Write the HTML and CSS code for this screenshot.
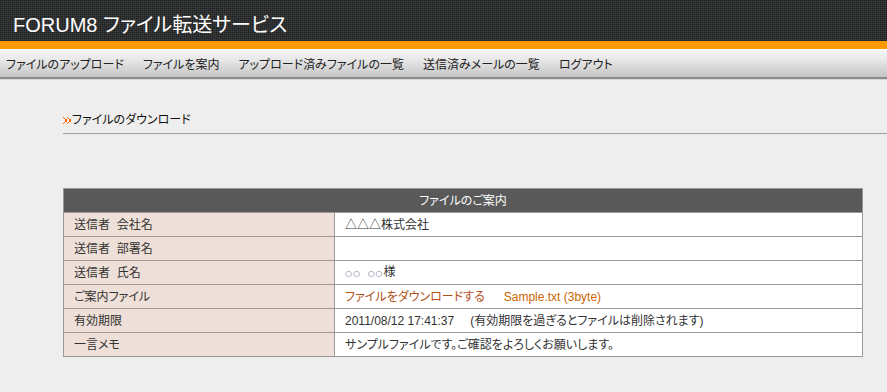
FILE: index.html
```html
<!DOCTYPE html>
<html lang="ja">
  <head>
    <meta charset="UTF-8" />
    <title>FORUM8 ファイル転送サービス</title>
    <link rel="stylesheet" href="styles.css">
  </head>
  <body>
    <div class="header">
      <h1 class="site-title">FORUM8 ファイル転送サービス</h1>
    </div>
    <div class="nav">
      <a href="#">ファイルのアップロード</a>
      <a href="#">ファイルを案内</a>
      <a href="#">アップロード済みファイルの一覧</a>
      <a href="#">送信済みメールの一覧</a>
      <a href="#">ログアウト</a>
    </div>
    <div class="content">
      <h2 class="page-title">
        <svg class="arrows" width="8" height="7" viewBox="0 0 8 7">
          <rect x="0" y="0" width="1" height="1" />
          <rect x="1" y="1" width="1" height="1" />
          <rect x="2" y="2" width="2" height="3" />
          <rect x="1" y="5" width="1" height="1" />
          <rect x="0" y="6" width="1" height="1" />
          <rect x="4" y="0" width="1" height="1" />
          <rect x="5" y="1" width="1" height="1" />
          <rect x="6" y="2" width="2" height="3" />
          <rect x="5" y="5" width="1" height="1" />
          <rect x="4" y="6" width="1" height="1" />
        </svg>ファイルのダウンロード
      </h2>
      <table class="info-table">
        <tr>
          <th colspan="2">ファイルのご案内</th>
        </tr>
        <tr>
          <td class="label">送信者&nbsp;&nbsp;会社名</td>
          <td>△△△株式会社</td>
        </tr>
        <tr>
          <td class="label">送信者&nbsp;&nbsp;部署名</td>
          <td></td>
        </tr>
        <tr>
          <td class="label">送信者&nbsp;&nbsp;氏名</td>
          <td><span class="circles">○○</span>&nbsp;&nbsp;<span class="circles">○○</span>様</td>
        </tr>
        <tr>
          <td class="label">ご案内ファイル</td>
          <td><a href="#" class="dl-link">ファイルをダウンロードする</a><span class="file-name">Sample.txt (3byte)</span></td>
        </tr>
        <tr>
          <td class="label">有効期限</td>
          <td>2011/08/12 17:41:37<span class="note">(有効期限を過ぎるとファイルは削除されます)</span></td>
        </tr>
        <tr>
          <td class="label">一言メモ</td>
          <td>サンプルファイルです。ご確認をよろしくお願いします。</td>
        </tr>
      </table>
    </div>
  </body>
</html>
```

FILE: styles.css
```css
body {
  margin: 0;
  padding: 0;
  background-color: #eeeeee;
  color: #333333;
  font-family: "Liberation Sans", "Noto Sans CJK JP", sans-serif;
  font-size: 12px;
  font-feature-settings: "palt";
}

.header {
  height: 41px;
  background-color: #3b3d3e;
  background-image:
    repeating-linear-gradient(0deg, rgba(0, 0, 0, 0.25) 0 1px, transparent 1px 2px),
    repeating-linear-gradient(90deg, rgba(0, 0, 0, 0.25) 0 1px, transparent 1px 2px);
  border-bottom: 8px solid #ff9900;
}

.site-title {
  margin: 0;
  padding: 13px 0 0 13px;
  color: #ffffff;
  font-size: 20px;
  font-weight: normal;
  line-height: 24px;
}

.nav {
  height: 27px;
  display: flex;
  align-items: center;
  gap: 19px;
  padding-left: 6px;
  background: linear-gradient(#f6f6f6, #e6e6e6 40%, #c4c4c4);
  border-top: 1px solid #ffffff;
  border-bottom: 2px solid #8a8a8a;
  box-shadow: 0 1px 0 #d8d8d8;
}

.nav a {
  color: #222222;
  text-decoration: none;
}

.content {
  padding: 33px 0 0 63px;
}

.page-title {
  margin: 0;
  padding-bottom: 5px;
  font-size: 12px;
  font-weight: normal;
  color: #111111;
  line-height: 16px;
  border-bottom: 1px solid #a0a0a0;
  display: flex;
  align-items: center;
}

.arrows {
  fill: #ff6600;
  margin-right: 1px;
}

.info-table {
  margin-top: 54px;
  width: 800px;
  border-collapse: collapse;
  background-color: #ffffff;
  border: 1px solid #999999;
}

.info-table th,
.info-table td {
  height: 23px;
  padding: 0 10px;
  border: 1px solid #999999;
  text-align: left;
  font-weight: normal;
  line-height: 16px;
}

.info-table th {
  background-color: #595959;
  color: #ffffff;
  text-align: center;
}

.info-table .label {
  width: 250px;
  background-color: #eee0d8;
}

.circles {
  font-family: "DejaVu Sans", sans-serif;
  font-size: 8px;
  color: #5a6a8a;
  letter-spacing: 1px;
}

.dl-link {
  color: #b0501a;
  text-decoration: none;
}

.file-name {
  color: #cc6600;
  margin-left: 19px;
}

.note {
  margin-left: 16px;
}
```
